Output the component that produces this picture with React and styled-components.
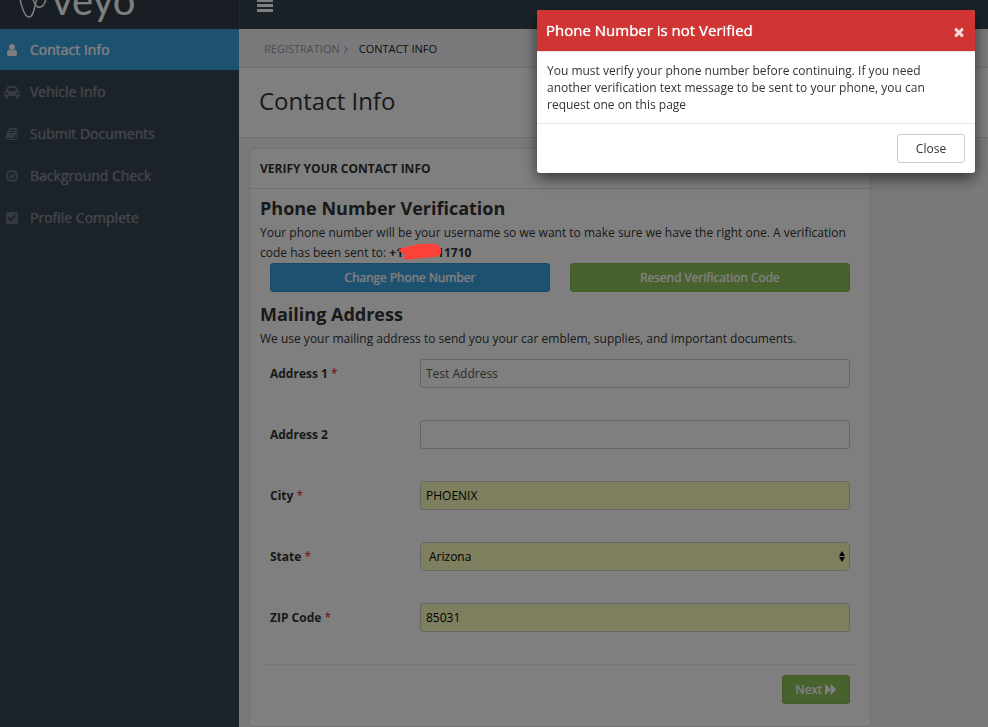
import React from "react";
import styled, { createGlobalStyle } from "styled-components";

const GlobalStyle = createGlobalStyle`
  * {
    box-sizing: border-box;
  }
  body {
    margin: 0;
    background: #f4f4f8;
    color: #333;
    font-family: "Open Sans", sans-serif;
    font-size: 12px;
    line-height: 20px;
  }
  h1, h2, h3, p, ul, ol {
    margin: 0;
    padding: 0;
  }
  button, input, select {
    font: inherit;
  }
`;

const icons = {
  user: {
    width: 1280,
    d: "M1280 1399q0 109-62.5 187t-150.5 78h-854q-88 0-150.5-78t-62.5-187q0-85 8.5-160.5t31.5-152 58.5-131 94-89 134.5-34.5q131 128 313 128t313-128q76 0 134.5 34.5t94 89 58.5 131 31.5 152 8.5 160.5zm-256-887q0 159-112.5 271.5t-271.5 112.5-271.5-112.5-112.5-271.5 112.5-271.5 271.5-112.5 271.5 112.5 112.5 271.5z",
  },
  car: {
    width: 2048,
    d: "M480 1088q0-66-47-113t-113-47-113 47-47 113 47 113 113 47 113-47 47-113zm36-320h1016l-89-357q-2-8-14-17.5t-21-9.5h-768q-9 0-21 9.5t-14 17.5zm1372 320q0-66-47-113t-113-47-113 47-47 113 47 113 113 47 113-47 47-113zm160-96v384q0 14-9 23t-23 9h-96v128q0 80-56 136t-136 56-136-56-56-136v-128h-1024v128q0 80-56 136t-136 56-136-56-56-136v-128h-96q-14 0-23-9t-9-23v-384q0-93 65.5-158.5t158.5-65.5h28l105-419q23-94 104-157.5t179-63.5h768q98 0 179 63.5t104 157.5l105 419h28q93 0 158.5 65.5t65.5 158.5z",
  },
  book: {
    width: 1792,
    d: "M1703 478q40 57 18 129l-275 906q-19 64-76.5 107.5t-122.5 43.5h-923q-77 0-148.5-53.5t-99.5-131.5q-24-67-2-127 0-4 3-27t4-37q1-8-3-21.5t-3-19.5q2-11 8-21t16.5-23.5 16.5-23.5q23-38 45-91.5t30-91.5q3-10 .5-30t-.5-28q3-11 17-28t17-23q21-36 42-92t25-90q1-9-2.5-32t.5-28q4-13 22-30.5t22-22.5q19-26 42.5-84.5t27.5-96.5q1-8-3-25.5t-2-26.5q2-8 9-18t18-23 17-21q8-12 16.5-30.5t15-35 16-36 19.5-32 26.5-23.5 36-11.5 47.5 5.5l-1 3q38-9 51-9h761q74 0 114 56t18 130l-274 906q-36 119-71.5 153.5t-128.5 34.5h-869q-27 0-38 15-11 16-1 43 24 70 144 70h923q29 0 56-15.5t35-41.5l300-987q7-22 5-57 38 15 59 43zm-1064 2q-4 13 2 22.5t20 9.5h608q13 0 25.5-9.5t16.5-22.5l21-64q4-13-2-22.5t-20-9.5h-608q-13 0-25.5 9.5t-16.5 22.5zm-83 256q-4 13 2 22.5t20 9.5h608q13 0 25.5-9.5t16.5-22.5l21-64q4-13-2-22.5t-20-9.5h-608q-13 0-25.5 9.5t-16.5 22.5z",
  },
  checkCircle: {
    width: 1792,
    d: "M1299 813l-422 422q-19 19-45 19t-45-19l-294-294q-19-19-19-45t19-45l102-102q19-19 45-19t45 19l147 147 275-275q19-19 45-19t45 19l102 102q19 19 19 45t-19 45zm141 83q0-148-73-273t-198-198-273-73-273 73-198 198-73 273 73 273 198 198 273 73 273-73 198-198 73-273zm224 0q0 209-103 385.5t-279.5 279.5-385.5 103-385.5-103-279.5-279.5-103-385.5 103-385.5 279.5-279.5 385.5-103 385.5 103 279.5 279.5 103 385.5z",
  },
  checkSquare: {
    width: 1792,
    d: "M813 1299l614-614q19-19 19-45t-19-45l-102-102q-19-19-45-19t-45 19l-467 467-211-211q-19-19-45-19t-45 19l-102 102q-19 19-19 45t19 45l358 358q19 19 45 19t45-19zm851-883v960q0 119-84.5 203.5t-203.5 84.5h-960q-119 0-203.5-84.5t-84.5-203.5v-960q0-119 84.5-203.5t203.5-84.5h960q119 0 203.5 84.5t84.5 203.5z",
  },
  forward: {
    width: 1575,
    d: "M45 1651q-19 19-32 13t-13-32v-1472q0-26 13-32t32 13l710 710q9 9 13 19v-710q0-26 13-32t32 13l710 710q19 19 19 45t-19 45l-710 710q-19 19-32 13t-13-32v-710q-4 10-13 19z",
  },
  times: {
    width: 1792,
    d: "M1490 1322q0 40-28 68l-136 136q-28 28-68 28t-68-28l-294-294-294 294q-28 28-68 28t-68-28l-136-136q-28-28-28-68t28-68l294-294-294-294q-28-28-28-68t28-68l136-136q28-28 68-28t68 28l294 294 294-294q28-28 68-28t68 28l136 136q28 28 28 68t-28 68l-294 294 294 294q28 28 28 68z",
  },
  angleRight: {
    width: 1792,
    d: "M1171 960q0 13-10 23l-466 466q-10 10-23 10t-23-10l-50-50q-10-10-10-23t10-23l393-393-393-393q-10-10-10-23t10-23l50-50q10-10 23-10t23 10l466 466q10 10 10 23z",
  },
};

const Svg = styled.svg`
  display: block;
  height: ${(props) => props.$size}px;
  fill: currentColor;
`;

const Icon = ({ name, size = 14 }) => (
  <Svg
    $size={size}
    viewBox={`0 0 ${icons[name].width} 1792`}
    aria-hidden="true"
  >
    <path d={icons[name].d} />
  </Svg>
);

const TopBar = styled.header`
  display: flex;
  height: 29px;
  overflow: hidden;
  background: #354452;
`;

const Brand = styled.a`
  display: flex;
  align-items: flex-end;
  width: 240px;
  height: 29px;
  padding-left: 18px;
  background: #323d49;
  border-right: 1px solid #414f5c;
  color: #fff;
  text-decoration: none;
`;

const BrandMark = styled.svg`
  width: 34px;
  height: 29px;
  fill: none;
  stroke: currentColor;
`;

const BrandName = styled.span`
  padding-bottom: 5px;
  font-family: Lato, sans-serif;
  font-size: 40px;
  line-height: 48px;
`;

const MenuButton = styled.button`
  display: flex;
  height: 29px;
  padding: 0 17px;
  border: 0;
  background: none;
  color: #fff;
`;

const Layout = styled.div`
  display: flex;
  min-height: calc(100vh - 29px);
`;

const Sidebar = styled.nav`
  flex: 0 0 239px;
  background: #364552;
`;

const NavList = styled.ul`
  list-style: none;
`;

const NavLink = styled.a`
  display: flex;
  align-items: center;
  gap: 10px;
  height: 42px;
  padding-left: 4px;
  border-bottom: 1px solid #3d4c59;
  background: ${(props) => (props.$active ? "#3aa2e0" : "transparent")};
  color: ${(props) => (props.$active ? "#fff" : "#858a90")};
  font-size: 14px;
  text-decoration: none;
  text-shadow: 0 0 1px currentColor;
`;

const NavIcon = styled.span`
  display: flex;
  justify-content: center;
  width: 16px;
  color: ${(props) => (props.$active ? "#fff" : "#6b7480")};
`;

const Main = styled.main`
  flex: 1;
  min-width: 0;
`;

const Breadcrumb = styled.ol`
  display: flex;
  align-items: center;
  height: 39px;
  padding: 2px 0 0 25px;
  border-bottom: 1px solid #e2e2e6;
  font-size: 11px;
  list-style: none;
  text-transform: uppercase;
`;

const Crumb = styled.li`
  display: flex;
  align-items: center;
  color: ${(props) => (props.$current ? "#222" : "#999")};

  & a {
    color: inherit;
    text-decoration: none;
  }
  & svg {
    margin-right: 7px;
  }
`;

const PageTitle = styled.h1`
  padding: 15px 20px 19px;
  background: #fff;
  border-bottom: 1px solid #e2e2e6;
  font-size: 24px;
  font-weight: 400;
  line-height: 35px;
`;

const Panel = styled.section`
  max-width: 622px;
  margin: 10px 10px 0;
  background: #fff;
  border: 1px solid #e2e2e6;
  border-radius: 4px;
`;

const PanelTitle = styled.h2`
  padding: 10px 10px 9px;
  border-bottom: 1px solid #e2e2e6;
  font-size: 12px;
  font-weight: 700;
  text-transform: uppercase;
`;

const PanelBody = styled.div`
  padding: 10px 10px 22px;
`;

const SectionTitle = styled.h3`
  padding-bottom: 5px;
  font-size: 18px;
  font-weight: 700;
  line-height: 19px;
`;

const Redacted = styled.span`
  position: relative;
  display: inline-block;
  width: 34px;
  height: 12px;
`;

const Scribble = styled.svg`
  position: absolute;
  left: -5px;
  top: -2px;
  z-index: 20;
  width: 44px;
  height: 18px;
`;

const ButtonRow = styled.div`
  display: flex;
  gap: 20px;
  margin: 0 10px 13px;
`;

const colors = {
  blue: ["#3aa2e0", "#2f94d0", "#fff"],
  green: ["#8fc45a", "#84b84f", "#fff"],
  plain: ["#fff", "#ccc", "#333"],
};

const Button = styled.button`
  display: flex;
  flex: ${(props) => (props.$wide ? 1 : "none")};
  align-items: center;
  justify-content: center;
  gap: 3px;
  min-width: 68px;
  height: 29px;
  padding: 0 12px;
  background: ${(props) => colors[props.$color][0]};
  border: 1px solid ${(props) => colors[props.$color][1]};
  border-radius: 3px;
  color: ${(props) => colors[props.$color][2]};
  text-shadow: ${(props) =>
    props.$color === "plain" ? "none" : "0 0 1px currentColor"};
`;

const Form = styled.form`
  display: flex;
  flex-direction: column;
  gap: 32px;
  padding: 10px 10px 0;
`;

const Field = styled.div`
  display: flex;
  align-items: center;
`;

const Label = styled.label`
  flex: 0 0 150px;
  font-weight: 700;
`;

const Required = styled.span`
  color: #f01020;
  font-weight: 400;
`;

const Input = styled.input`
  flex: 1;
  min-width: 0;
  height: 29px;
  padding: 0 5px;
  background: ${(props) => (props.$filled ? "#faffbd" : "#fff")};
  border: 1px solid #ccc;
  border-radius: 3px;
  color: ${(props) => (props.$filled ? "#000" : "#555")};
`;

const SelectWrap = styled.div`
  position: relative;
  display: flex;
  flex: 1;
`;

const Select = styled.select`
  flex: 1;
  height: 29px;
  padding: 0 8px;
  appearance: none;
  background: #faffbd;
  border: 1px solid #ccc;
  border-radius: 5px;
  color: #000;
`;

const SelectArrows = styled.svg`
  position: absolute;
  right: 4px;
  top: 8px;
  width: 8px;
  height: 13px;
  pointer-events: none;
`;

const Actions = styled.div`
  display: flex;
  justify-content: flex-end;
  margin: 0 -5px;
  padding: 10px 5px 0;
  border-top: 1px solid #eee;
`;

const Backdrop = styled.div`
  position: fixed;
  inset: 0;
  z-index: 10;
  background: rgba(0, 0, 0, 0.5);
`;

const Dialog = styled.div`
  position: fixed;
  top: 10px;
  right: 13px;
  z-index: 30;
  width: 438px;
  max-width: calc(100% - 26px);
  overflow: hidden;
  background: #fff;
  border-radius: 3px;
  box-shadow: 0 5px 15px rgba(0, 0, 0, 0.6);
`;

const DialogHeader = styled.div`
  display: flex;
  align-items: center;
  justify-content: space-between;
  height: 42px;
  padding: 0 9px;
  background: #d03533;
  border-bottom: 1px solid #e5e5e5;
  color: #fff;
`;

const DialogTitle = styled.h2`
  padding-bottom: 2px;
  font-size: 15px;
  font-weight: 400;
  text-shadow: 0 0 1px currentColor;
`;

const DialogClose = styled.button`
  padding: 2px 0 0;
  border: 0;
  background: none;
  color: #fff;
  opacity: 0.8;
`;

const DialogBody = styled.p`
  padding: 10px;
  line-height: 17px;
`;

const DialogFooter = styled.div`
  display: flex;
  justify-content: flex-end;
  padding: 10px;
  border-top: 1px solid #e5e5e5;
`;

const steps = [
  { label: "Contact Info", icon: "user", active: true },
  { label: "Vehicle Info", icon: "car" },
  { label: "Submit Documents", icon: "book" },
  { label: "Background Check", icon: "checkCircle" },
  { label: "Profile Complete", icon: "checkSquare" },
];

const FieldLabel = ({ id, text, required }) => (
  <Label htmlFor={id}>
    {text} {required && <Required>*</Required>}
  </Label>
);

const TextField = ({ id, label, value, required, filled }) => (
  <Field>
    <FieldLabel id={id} text={label} required={required} />
    <Input id={id} type="text" defaultValue={value} $filled={filled} />
  </Field>
);

const App = () => {
  return (
    <>
      <GlobalStyle />
      <TopBar>
        <Brand href="#">
          <BrandMark viewBox="0 0 34 29" aria-hidden="true">
            <path
              d="M2 -1C4 8 7 17 11 17C16 17 16 7 19 -1M15 -1C16 4 19 8 22 7C25 7 27 3 28 -1"
              strokeWidth="1.5"
            />
          </BrandMark>
          <BrandName>veyo</BrandName>
        </Brand>
        <MenuButton type="button" aria-label="Toggle menu">
          <svg width="16" height="12" viewBox="0 0 16 12" fill="currentColor">
            <path d="M0 0h16v2H0zM0 4h16v3H0zM0 9h16v3H0z" />
          </svg>
        </MenuButton>
      </TopBar>
      <Layout>
        <Sidebar>
          <NavList>
            {steps.map((step) => (
              <li key={step.label}>
                <NavLink href="#" $active={step.active}>
                  <NavIcon $active={step.active}>
                    <Icon name={step.icon} />
                  </NavIcon>
                  {step.label}
                </NavLink>
              </li>
            ))}
          </NavList>
        </Sidebar>
        <Main>
          <Breadcrumb>
            <Crumb>
              <a href="#">Registration</a>
              <Icon name="angleRight" size={12} />
            </Crumb>
            <Crumb $current>Contact Info</Crumb>
          </Breadcrumb>
          <PageTitle>Contact Info</PageTitle>
          <Panel>
            <PanelTitle>Verify your contact info</PanelTitle>
            <PanelBody>
              <SectionTitle>Phone Number Verification</SectionTitle>
              <p>
                Your phone number will be your username so we want to make sure
                we have the right one. A verification code has been sent to:{" "}
                <strong>
                  +1
                  <Redacted>
                    <Scribble viewBox="0 0 44 18" aria-hidden="true">
                      <path
                        d="M1 6C8 4 20 0 31 1C37 0 43 3 43 7C44 11 41 14 37 14C30 15 20 15 15 16C9 18 5 16 5 14L8 11C5 11 3 10 3 9L1 8Z"
                        fill="#fd4239"
                      />
                    </Scribble>
                  </Redacted>
                  11710
                </strong>
              </p>
              <ButtonRow>
                <Button type="button" $color="blue" $wide>
                  Change Phone Number
                </Button>
                <Button type="button" $color="green" $wide>
                  Resend Verification Code
                </Button>
              </ButtonRow>
              <SectionTitle>Mailing Address</SectionTitle>
              <p>
                We use your mailing address to send you your car emblem,
                supplies, and important documents.
              </p>
              <Form>
                <TextField
                  id="address1"
                  label="Address 1"
                  value="Test Address"
                  required
                />
                <TextField id="address2" label="Address 2" value="" />
                <TextField
                  id="city"
                  label="City"
                  value="PHOENIX"
                  required
                  filled
                />
                <Field>
                  <FieldLabel id="state" text="State" required />
                  <SelectWrap>
                    <Select id="state" defaultValue="AZ">
                      <option value="AZ">Arizona</option>
                    </Select>
                    <SelectArrows viewBox="0 0 8 13" aria-hidden="true">
                      <path d="M4 1l3 5H1zM4 12l3-5H1z" />
                    </SelectArrows>
                  </SelectWrap>
                </Field>
                <TextField
                  id="zip"
                  label="ZIP Code"
                  value="85031"
                  required
                  filled
                />
                <Actions>
                  <Button type="submit" $color="green">
                    Next <Icon name="forward" size={13} />
                  </Button>
                </Actions>
              </Form>
            </PanelBody>
          </Panel>
        </Main>
      </Layout>
      <Backdrop />
      <Dialog role="dialog" aria-modal="true" aria-labelledby="dialog-title">
        <DialogHeader>
          <DialogTitle id="dialog-title">
            Phone Number is not Verified
          </DialogTitle>
          <DialogClose type="button" aria-label="Close">
            <Icon name="times" />
          </DialogClose>
        </DialogHeader>
        <DialogBody>
          You must verify your phone number before continuing. If you need
          another verification text message to be sent to your phone, you can
          request one on this page
        </DialogBody>
        <DialogFooter>
          <Button type="button" $color="plain">
            Close
          </Button>
        </DialogFooter>
      </Dialog>
    </>
  );
};

export default App;
